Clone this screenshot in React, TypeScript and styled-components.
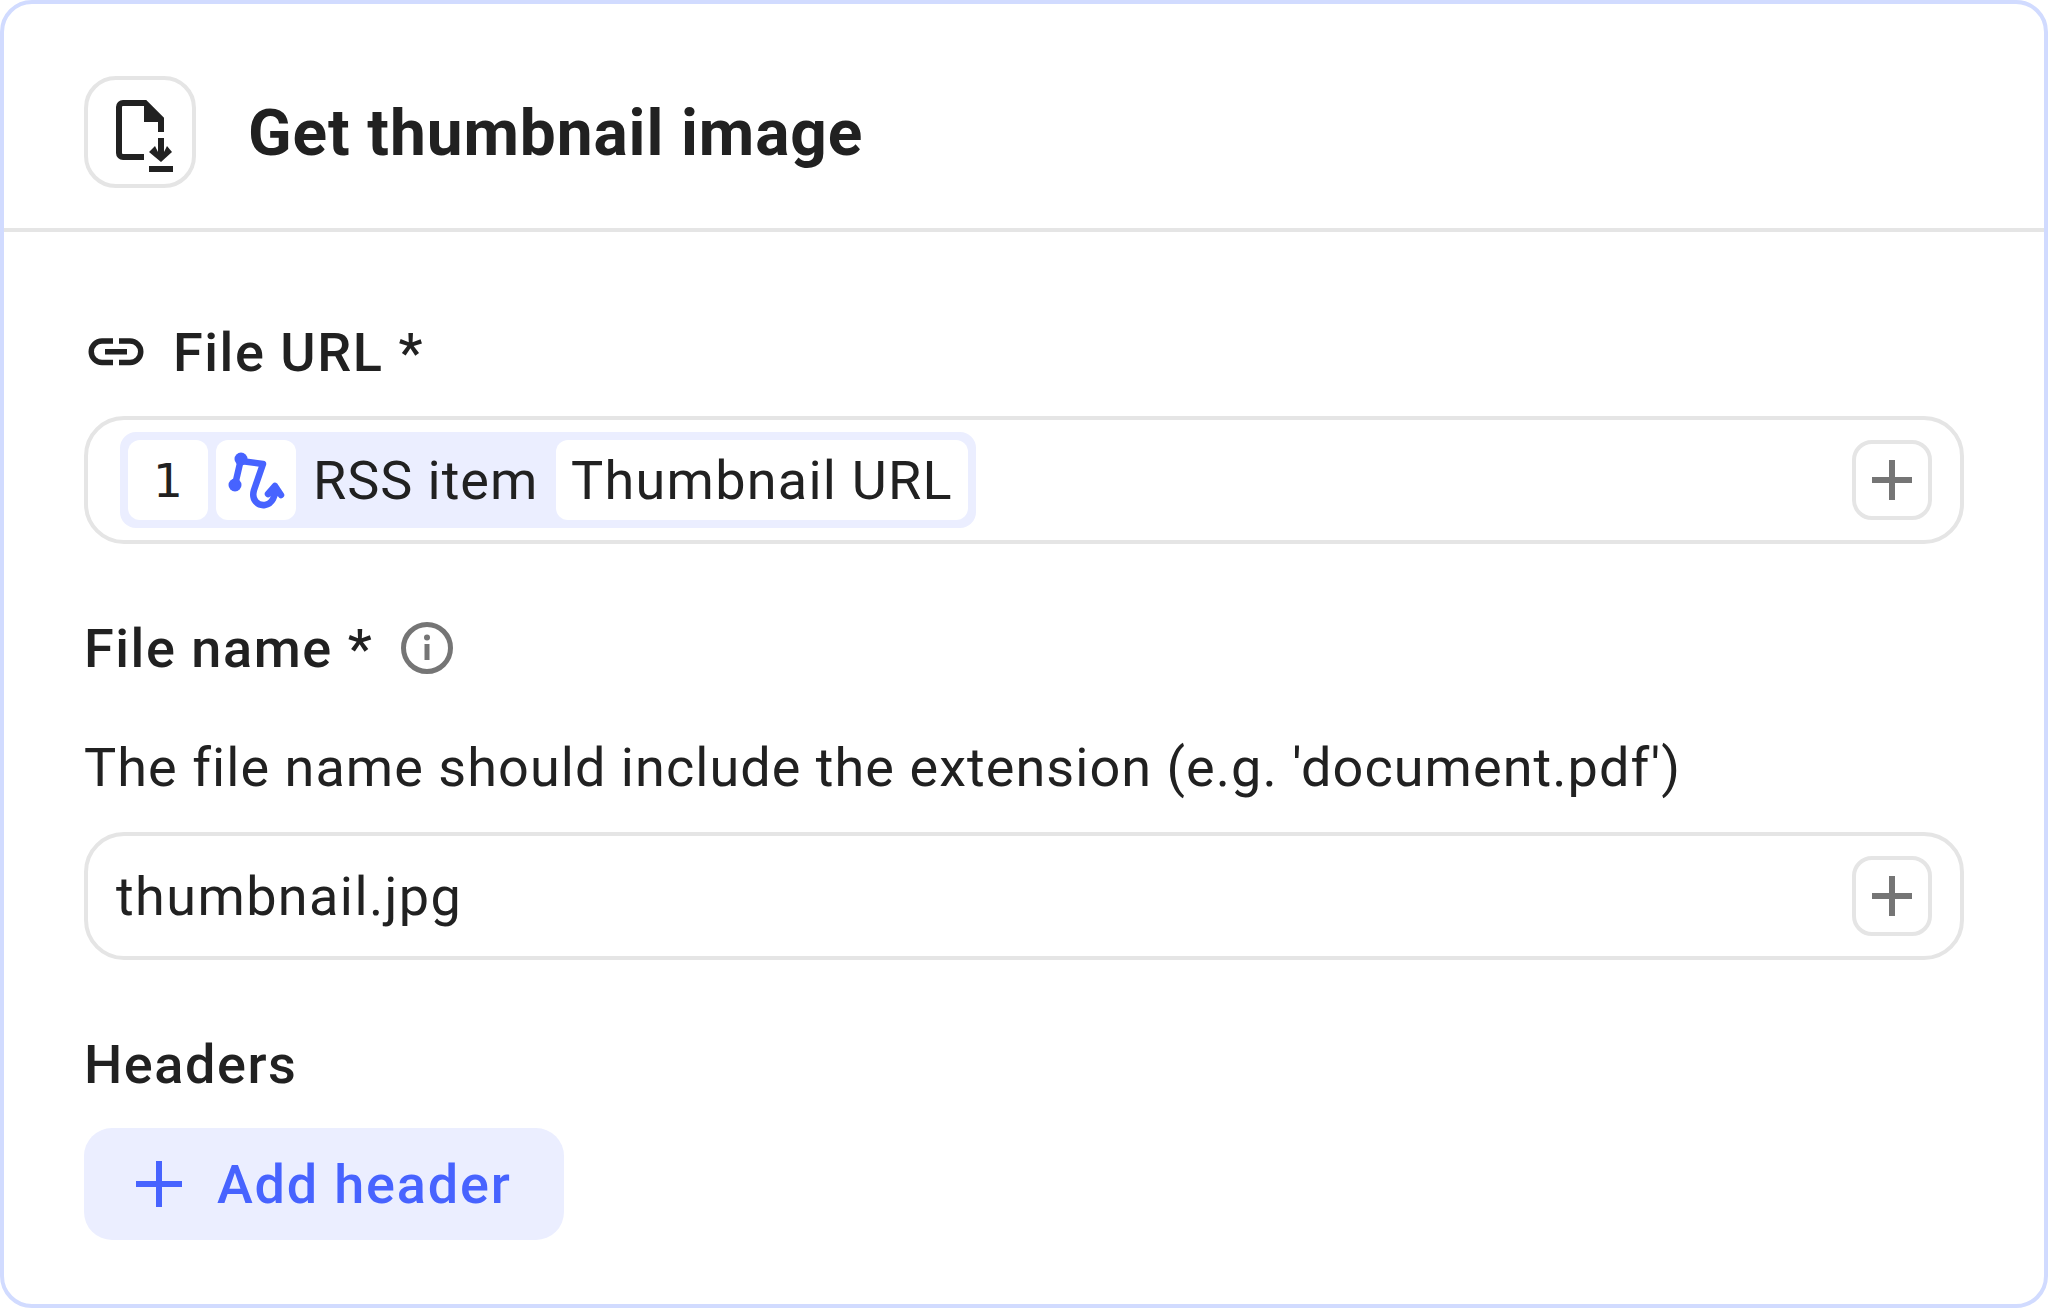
import React from 'react';
import styled, { createGlobalStyle } from 'styled-components';

const INK = '#212121';
const LINE = '#e5e5e5';
const BLUE = '#4763ff';
const FONT = `Roboto, "Noto Sans", sans-serif`;

const GlobalStyle = createGlobalStyle`
  html, body {
    margin: 0;
    padding: 0;
    background: #ffffff;
  }
  * {
    box-sizing: border-box;
  }
`;

const Card = styled.section`
  width: 2048px;
  height: 1308px;
  border: 4px solid #d1dbff;
  border-radius: 32px;
  background: #fff;
  font-family: ${FONT};
  color: ${INK};
`;

const Header = styled.header`
  display: flex;
  align-items: center;
  gap: 52px;
  padding: 72px 80px 40px;
  border-bottom: 4px solid ${LINE};
`;

const IconBox = styled.div`
  width: 112px;
  height: 112px;
  border: 4px solid ${LINE};
  border-radius: 32px;
  display: flex;
  align-items: center;
  justify-content: center;
`;

const Title = styled.h1`
  margin: 0;
  padding-top: 4px;
  font-size: 64px;
  line-height: 72px;
  font-weight: 700;
  letter-spacing: 0.9px;
`;

const Body = styled.div`
  display: flex;
  flex-direction: column;
  padding: 84px 80px 0;
`;

const Field = styled.div<{ $gapTop?: boolean }>`
  display: flex;
  flex-direction: column;
  margin-top: ${({ $gapTop }) => ($gapTop ? '68px' : '0')};
`;

const Label = styled.div`
  display: flex;
  align-items: center;
  height: 72px;
  font-size: 54px;
  font-weight: 500;
  letter-spacing: 1.55px;
`;

const LinkGlyph = styled.svg`
  width: 56px;
  height: 28px;
  margin: 0 29px 0 4px;
  fill: none;
  stroke: ${INK};
  stroke-width: 5.5;
`;

const InfoGlyph = styled.svg`
  width: 52px;
  height: 52px;
  margin-left: 28px;
`;

const Description = styled.p`
  margin: 48px 0 0;
  font-size: 54px;
  line-height: 72px;
  font-weight: 400;
  letter-spacing: 1.05px;
`;

const Input = styled.div`
  margin-top: 28px;
  height: 128px;
  border: 4px solid ${LINE};
  border-radius: 40px;
  display: flex;
  align-items: center;
  justify-content: space-between;
  padding: 0 28px;
  font-size: 54px;
  letter-spacing: 1.4px;
`;

const TagGroup = styled.div`
  height: 96px;
  display: flex;
  align-items: center;
  gap: 8px;
  margin-left: 4px;
  padding: 0 8px;
  border-radius: 16px;
  background: #ebeeff;
`;

const TagBox = styled.div<{ $wide?: boolean }>`
  height: 80px;
  width: ${({ $wide }) => ($wide ? '412px' : '80px')};
  border-radius: 12px;
  background: #fff;
  display: flex;
  align-items: center;
  justify-content: center;
  letter-spacing: 1.25px;
`;

const StepNumber = styled.span`
  font-family: "DejaVu Sans", sans-serif;
  font-size: 47px;
  font-weight: 400;
  letter-spacing: 0;
`;

const TagText = styled.span`
  width: 244px;
  padding-left: 9px;
  white-space: nowrap;
  letter-spacing: 0.95px;
`;

const AddButton = styled.div`
  width: 80px;
  height: 80px;
  border: 4px solid ${LINE};
  border-radius: 20px;
  display: flex;
  align-items: center;
  justify-content: center;
`;

const PlusGlyph = styled.svg<{ $color: string; $size: number }>`
  width: ${({ $size }) => $size}px;
  height: ${({ $size }) => $size}px;
  flex: none;
  fill: none;
  stroke: ${({ $color }) => $color};
  stroke-width: 6;
`;

const PrimaryButton = styled.div`
  margin-top: 28px;
  width: 480px;
  height: 112px;
  border-radius: 28px;
  background: #ebeeff;
  color: ${BLUE};
  display: flex;
  align-items: center;
  gap: 35px;
  padding-left: 52px;
  font-size: 54px;
  font-weight: 500;
  letter-spacing: 1.8px;
`;

const Plus = ({ color, size }: { color: string; size: number }) => (
  <PlusGlyph $color={color} $size={size} viewBox={`0 0 ${size} ${size}`}>
    <path d={`M${size / 2} 0V${size}M0 ${size / 2}H${size}`} />
  </PlusGlyph>
);

const FileDownloadIcon = () => (
  <svg width="80" height="80" viewBox="0 0 80 80" style={{ flex: 'none' }}>
    <path
      d="M44 65H23a4 4 0 0 1-4-4V15a4 4 0 0 1 4-4H45L61 27V40"
      fill="none"
      stroke={INK}
      strokeWidth="6"
    />
    <path d="M44 9L63 28V30H44Z" fill={INK} />
    <path d="M58 46H64V60L67 54L72 60L61 70L49 60L55 54L58 60Z" fill={INK} />
    <path d="M49 74H73V80H49Z" fill={INK} />
  </svg>
);

const WorkflowIcon = () => (
  <svg width="80" height="80" viewBox="0 0 80 80">
    <circle cx="25" cy="19" r="6.5" fill={BLUE} />
    <circle cx="19" cy="45" r="6.5" fill={BLUE} />
    <path
      d="M25 19L19 45M25 21L47 24L38 50C35 60 42 66 49 65C56 64 60 56 59 47M52 54L59 46L65 55"
      fill="none"
      stroke={BLUE}
      strokeWidth="6.5"
      strokeLinecap="round"
      strokeLinejoin="round"
    />
  </svg>
);

export default function App() {
  return (
    <>
      <GlobalStyle />
      <Card>
        <Header>
          <IconBox>
            <FileDownloadIcon />
          </IconBox>
          <Title>Get thumbnail image</Title>
        </Header>
        <Body>
          <Field>
            <Label>
              <LinkGlyph viewBox="0 0 56 28">
                <path d="M25 3H14a10.7 10.7 0 0 0 0 21.5H25M31 3H42a10.7 10.7 0 0 1 0 21.5H31M17 13.7H39" />
              </LinkGlyph>
              File URL *
            </Label>
            <Input>
              <TagGroup>
                <TagBox>
                  <StepNumber>1</StepNumber>
                </TagBox>
                <TagBox>
                  <WorkflowIcon />
                </TagBox>
                <TagText>RSS item</TagText>
                <TagBox $wide>Thumbnail URL</TagBox>
              </TagGroup>
              <AddButton>
                <Plus color="#757575" size={40} />
              </AddButton>
            </Input>
          </Field>
          <Field $gapTop>
            <Label>
              File name *
              <InfoGlyph viewBox="0 0 52 52">
                <circle cx="26" cy="26" r="23.5" fill="none" stroke="#757575" strokeWidth="5" />
                <circle cx="26" cy="15.5" r="3" fill="#757575" />
                <path d="M26 22V38" stroke="#757575" strokeWidth="5" />
              </InfoGlyph>
            </Label>
            <Description>
              The file name should include the extension (e.g. 'document.pdf')
            </Description>
            <Input>
              thumbnail.jpg
              <AddButton>
                <Plus color="#757575" size={40} />
              </AddButton>
            </Input>
          </Field>
          <Field $gapTop>
            <Label>Headers</Label>
            <PrimaryButton>
              <Plus color={BLUE} size={46} />
              Add header
            </PrimaryButton>
          </Field>
        </Body>
      </Card>
    </>
  );
}
